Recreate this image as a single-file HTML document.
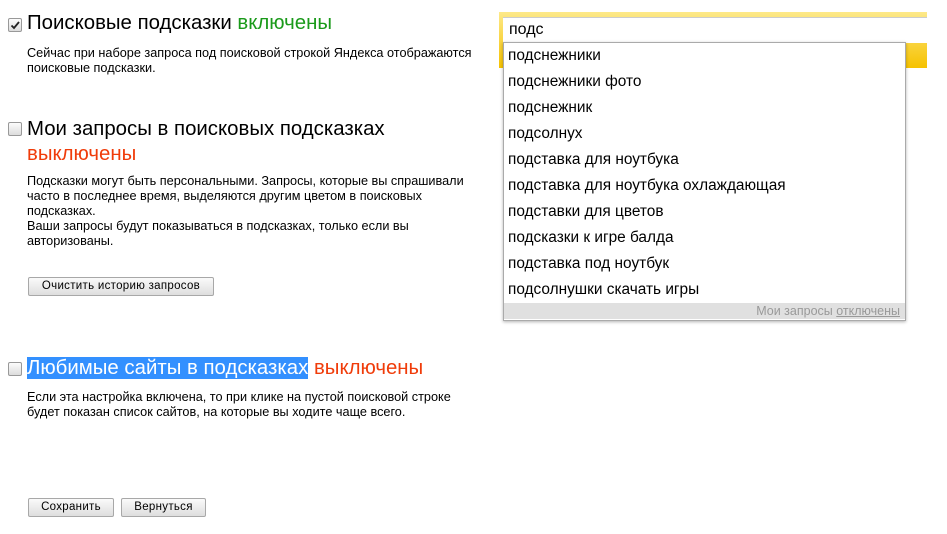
<!DOCTYPE html>
<html><head><meta charset="utf-8"><style>
body{margin:0;width:947px;height:534px;background:#fff;font-family:"Liberation Sans",Arial,sans-serif;position:relative;overflow:hidden;color:#000}
.a{position:absolute;white-space:nowrap}
.cb{position:absolute;left:8px;width:12px;height:12px;border:1px solid #999;border-radius:2px;background:linear-gradient(#fcfcfc,#dcdcdc)}
.h{font-size:20.4px;left:27px}
.t{font-size:12.7px;left:27px;line-height:15px}
.g{color:#1a9a1a}.r{color:#f03c0a}
.btn{position:absolute;height:17px;border:1px solid #a8a8a8;border-radius:2px;background:linear-gradient(#fafafa,#dedede);font-size:11.5px;text-align:center;line-height:17px;letter-spacing:.3px}
.it{position:absolute;left:508px;font-size:15.4px}
</style></head><body>
<div class="cb" style="top:18px"><svg width="12" height="12" style="position:absolute;left:0;top:0"><path d="M2.5 6.5 L5 9 L10 3" stroke="#222" stroke-width="1.8" fill="none"/></svg></div>
<div class="a h" style="top:12px">Поисковые подсказки <span class="g">включены</span></div>
<div class="a t" style="top:46px">Сейчас при наборе запроса под поисковой строкой Яндекса отображаются<br>поисковые подсказки.</div>

<div class="cb" style="top:122px"></div>
<div class="a h" style="top:117px;line-height:25px">Мои запросы в поисковых подсказках<br><span class="r">выключены</span></div>
<div class="a t" style="top:174px">Подсказки могут быть персональными. Запросы, которые вы спрашивали<br>часто в последнее время, выделяются другим цветом в поисковых<br>подсказках.<br>Ваши запросы будут показываться в подсказках, только если вы<br>авторизованы.</div>
<div class="btn" style="left:28px;top:277px;width:184px">Очистить историю запросов</div>

<div class="cb" style="top:362px"></div>
<div class="a h" style="top:357px"><span style="background:#3390ff;color:#fff">Любимые сайты в подсказках</span> <span class="r">выключены</span></div>
<div class="a t" style="top:390px">Если эта настройка включена, то при клике на пустой поисковой строке<br>будет показан список сайтов, на которые вы ходите чаще всего.</div>
<div class="btn" style="left:28px;top:498px;width:84px">Сохранить</div>
<div class="btn" style="left:121px;top:498px;width:83px">Вернуться</div>

<div class="a" style="left:499px;top:12px;width:428px;height:56px;background:linear-gradient(#fde989,#f6c200)"></div>
<div class="a" style="left:503px;top:17px;width:424px;height:25px;background:#fff;border-top:1px solid #ccc"></div>
<div class="a" style="left:509px;top:21px;font-size:16px">подс</div>
<div class="a" style="left:503px;top:42px;width:401px;height:277px;background:#fff;border:1px solid #aaa;box-shadow:0 1px 3px rgba(0,0,0,.3)"></div>
<div class="a" style="left:504px;top:303px;width:401px;height:16px;background:#e0e0e0"></div>
<div class="a" style="right:47px;top:304px;font-size:12.5px;color:#999">Мои запросы <span style="text-decoration:underline">отключены</span></div>
<div class="it" style="top:47px">подснежники</div>
<div class="it" style="top:73px">подснежники фото</div>
<div class="it" style="top:99px">подснежник</div>
<div class="it" style="top:125px">подсолнух</div>
<div class="it" style="top:151px">подставка для ноутбука</div>
<div class="it" style="top:177px">подставка для ноутбука охлаждающая</div>
<div class="it" style="top:203px">подставки для цветов</div>
<div class="it" style="top:229px">подсказки к игре балда</div>
<div class="it" style="top:255px">подставка под ноутбук</div>
<div class="it" style="top:281px">подсолнушки скачать игры</div>
</body></html>
